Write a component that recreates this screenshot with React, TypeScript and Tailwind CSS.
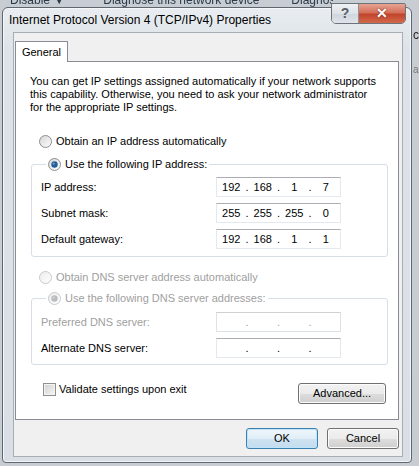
import React from 'react';

const font = { fontFamily: '"Liberation Sans", Arial, sans-serif' };

function Radio({ checked, disabled }: { checked?: boolean; disabled?: boolean }) {
  const ring = disabled ? '#c9c9c9' : '#8f8f8f';
  const dot = disabled ? '#b8bcbf' : '#1f5d9a';
  return (
    <svg width="13" height="13" viewBox="0 0 13 13" className="shrink-0">
      <defs>
        <linearGradient id={disabled ? 'rgd' : 'rg'} x1="0" y1="0" x2="1" y2="1">
          <stop offset="0" stopColor={disabled ? '#ececec' : '#d4d4d4'} />
          <stop offset="1" stopColor="#ffffff" />
        </linearGradient>
      </defs>
      <circle cx="6.5" cy="6.5" r="6" fill={`url(#${disabled ? 'rgd' : 'rg'})`} stroke={ring} />
      {checked && <circle cx="6.5" cy="6.5" r="3.2" fill={dot} />}
      {checked && <circle cx="5.7" cy="5.6" r="1.2" fill="#ffffff" opacity="0.35" />}
    </svg>
  );
}

function IpBox({ parts, disabled }: { parts: string[]; disabled?: boolean }) {
  return (
    <div
      className={`flex h-[20px] w-[125px] items-center border ${
        disabled ? 'border-[#dde2e6] border-t-[#cdd1d4]' : 'border-[#e3e9ef] border-t-[#abadb3]'
      } bg-white text-[11px] ${disabled ? 'text-[#a0a0a0]' : 'text-black'}`}
    >
      {parts.map((p, i) => (
        <React.Fragment key={i}>
          <span className="flex-1 text-center">{p}</span>
          {i < 3 && <span className="w-[3px] text-center">.</span>}
        </React.Fragment>
      ))}
    </div>
  );
}

function Button({ label, primary, className = '' }: { label: string; primary?: boolean; className?: string }) {
  return (
    <div
      className={`flex h-[21px] items-center justify-center rounded-[3px] border text-[11px] text-black ${
        primary
          ? 'border-[#3c7fb1] bg-[linear-gradient(#eef6fb_0%,#e1eef7_50%,#cfe3f1_51%,#c3dcee_100%)] shadow-[inset_0_0_0_1px_#bfe3f7]'
          : 'border-[#707070] bg-[linear-gradient(#f2f2f2_0%,#ebebeb_50%,#dddddd_51%,#cfcfcf_100%)] shadow-[inset_0_0_0_1px_#fcfcfc]'
      } ${className}`}
    >
      {label}
    </div>
  );
}

export default function App() {
  const ipRows = [
    { label: 'IP address:', parts: ['192', '168', '1', '7'] },
    { label: 'Subnet mask:', parts: ['255', '255', '255', '0'] },
    { label: 'Default gateway:', parts: ['192', '168', '1', '1'] },
  ];

  return (
    <div className="relative h-[466px] w-[419px] overflow-hidden bg-[#c7cdd3]" style={font}>
      {/* desktop behind the dialog */}
      <div className="absolute left-0 top-[-8px] flex h-[16px] w-[333px] items-center overflow-hidden whitespace-nowrap text-[12px] text-[#2b3a4a] blur-[0.4px]">
        <span className="ml-[10px]">Disable ▼</span>
        <span className="ml-[38px]">Diagnose this network device</span>
        <span className="ml-[32px] w-[61px] shrink-0 overflow-hidden">Diagnose this connection</span>
      </div>
      <div className="absolute left-[413px] top-[26px] text-[12px] text-[#222] blur-[0.4px]">ci</div>
      <div className="absolute left-[413px] top-[62px] text-[10px] text-[#777] blur-[0.4px]">a</div>

      {/* dialog window */}
      <div className="absolute left-[2px] top-[7px] flex h-[456px] w-[410px] flex-col rounded-t-[6px] rounded-b-[4px] border border-[#5f666d] bg-[linear-gradient(#e9edf1,#dde3e8_40px,#d9dfe4)] shadow-[inset_0_0_0_1px_#f4f7f9]">
        {/* caption buttons */}
        <div className="absolute right-[5px] top-[-5px] flex h-[21px] overflow-hidden rounded-b-[5px] rounded-t-[2px] border border-[#6d747b]">
          <div className="flex w-[27px] items-center justify-center border-r border-[#8a9096] bg-[linear-gradient(#eef1f4,#dde2e7_50%,#cfd5dc_51%,#dfe4e9)] text-[14px] font-bold text-[#5a6068]">
            ?
          </div>
          <div className="flex w-[46px] items-center justify-center bg-[linear-gradient(#e8a493,#d4705b_45%,#c2442b_55%,#d26a4c)] text-[14px] font-bold text-white [text-shadow:0_0_2px_#6b1a0a]">
            ✕
          </div>
        </div>

        {/* title */}
        <div className="flex h-[24px] items-center pl-[6px] text-[12px] text-black">
          Internet Protocol Version 4 (TCP/IPv4) Properties
        </div>

        {/* client area */}
        <div className="ml-[10px] flex h-[425px] w-[390px] flex-col border border-[#a6adb4] bg-[#f0f0f0]">
          <div className="ml-[1px] mt-[8px] flex">
            <div className="relative z-10 mb-[-1px] flex h-[21px] w-[53px] items-center justify-center border border-b-0 border-[#898c95] bg-white text-[11px] text-black">
              General
            </div>
          </div>
          <div className="ml-[1px] flex h-[359px] w-[384px] flex-col border border-[#898c95] bg-white text-[11px] text-black">
            <p className="ml-[14px] mt-[13px] leading-[13px]">
              You can get IP settings assigned automatically if your network supports
              <br />
              this capability. Otherwise, you need to ask your network administrator
              <br />
              for the appropriate IP settings.
            </p>

            <div className="ml-[23px] mt-[19px] flex h-[16px] items-center gap-[4px]">
              <Radio />
              <span>Obtain an IP address automatically</span>
            </div>

            <fieldset className="ml-[15px] mt-[7px] w-[357px] rounded-[3px] border border-[#d5dfe5] px-[9px] pb-[7px]">
              <legend className="ml-[5px] flex h-[16px] items-center gap-[4px] px-[2px]">
                <Radio checked />
                <span>Use the following IP address:</span>
              </legend>
              <div className="mt-[5px] flex flex-col gap-[6px]">
                {ipRows.map((r) => (
                  <div key={r.label} className="flex h-[20px] items-center">
                    <span className="w-[175px]">{r.label}</span>
                    <IpBox parts={r.parts} />
                  </div>
                ))}
              </div>
            </fieldset>

            <div className="ml-[23px] mt-[12px] flex h-[16px] items-center gap-[4px] text-[#a0a0a0]">
              <Radio disabled />
              <span>Obtain DNS server address automatically</span>
            </div>

            <fieldset className="ml-[15px] mt-[5px] w-[357px] rounded-[3px] border border-[#d5dfe5] px-[9px] pb-[6px]">
              <legend className="ml-[5px] flex h-[16px] items-center gap-[4px] px-[2px] text-[#a0a0a0]">
                <Radio checked disabled />
                <span>Use the following DNS server addresses:</span>
              </legend>
              <div className="mt-[6px] flex flex-col gap-[6px]">
                <div className="flex h-[20px] items-center">
                  <span className="w-[175px] text-[#a0a0a0]">Preferred DNS server:</span>
                  <IpBox parts={['', '', '', '']} disabled />
                </div>
                <div className="flex h-[20px] items-center">
                  <span className="w-[175px]">Alternate DNS server:</span>
                  <IpBox parts={['', '', '', '']} />
                </div>
              </div>
            </fieldset>

            <div className="mt-[16px] flex items-start justify-between pl-[27px] pr-[12px]">
              <div className="flex h-[16px] items-center gap-[3px]">
                <span className="h-[13px] w-[13px] border border-[#8f8f8f] bg-[linear-gradient(135deg,#d0d0d0,#f6f6f6)] shadow-[inset_0_0_0_1px_#f4f4f4]" />
                <span>Validate settings upon exit</span>
              </div>
              <Button label="Advanced..." className="mt-[2px] w-[88px]" />
            </div>
          </div>

          <div className="mt-[8px] flex justify-end gap-[9px] pr-[3px]">
            <Button label="OK" primary className="w-[72px]" />
            <Button label="Cancel" className="w-[72px]" />
          </div>
        </div>
      </div>
    </div>
  );
}
